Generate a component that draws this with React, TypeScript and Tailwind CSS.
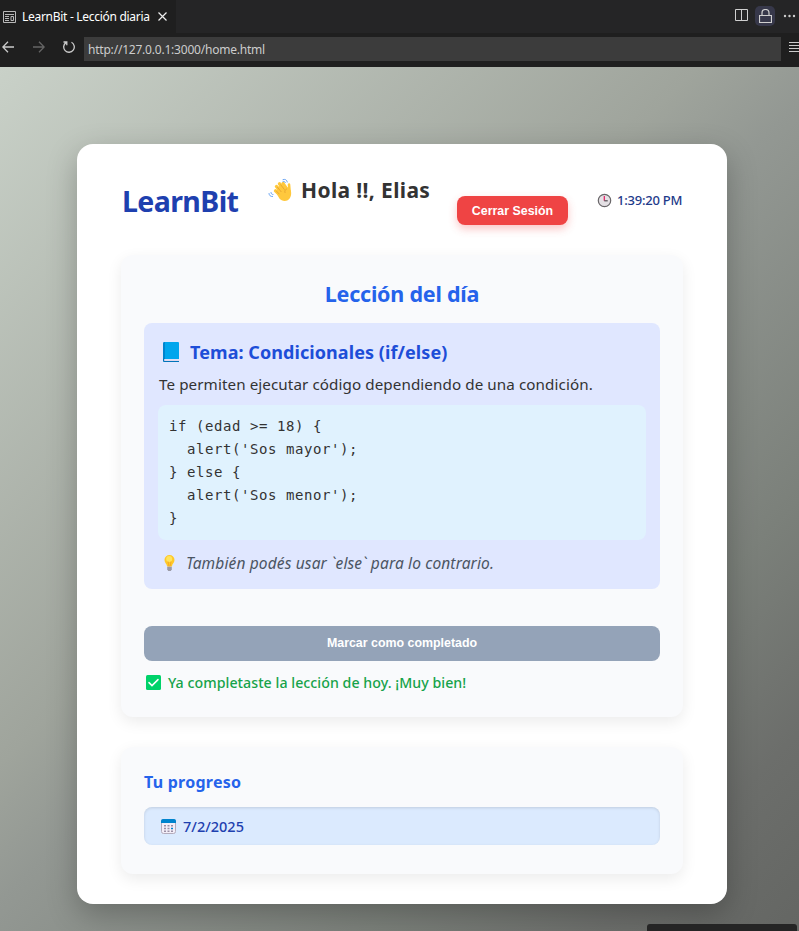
import React from "react";

const sans = "font-['Noto_Sans','Open_Sans',sans-serif]";

function Wave() {
  return (
    <svg className="h-6 w-6 shrink-0" viewBox="0 0 24 24" fill="none">
      <g stroke="#ffc83d" strokeLinecap="round">
        <path d="M8.500 8.500l5.500 6.500" strokeWidth="3.400" />
        <path d="M11.500 5.800l6 7" strokeWidth="3.400" />
        <path d="M15 5.500l4 6" strokeWidth="3.200" />
        <path d="M7.500 12.800l5.500 5.200" strokeWidth="3.400" />
        <path d="M21 6.500l.6 7" strokeWidth="2.600" />
      </g>
      <path d="M8 14.500l3-6.500 8 1 3.800 3.500c1.200 4.500-.6 8.500-3 9.700-3 1.500-6.400.8-8.400-1.700z" fill="#ffc83d" />
      <path d="M9.500 9.300l3.600 4.400M12.700 6.800l3.600 4.600M8.300 13l2.800 2.900M18.500 11c-1.800 1-2 2.300-1.500 3.600" stroke="#e09a2c" strokeWidth=".7" strokeLinecap="round" />
      <path d="M15 1.600c2-.8 4 .2 4.300 2.400M15 3.600c1.200-.3 2 .1 2.400 1M1 15.500c.2 2 1.500 3.200 3.600 3M3 14.500c.1 1.300.8 2 2 2" stroke="#5a9bf0" strokeWidth=".9" strokeLinecap="round" />
    </svg>
  );
}

function Clock() {
  return (
    <svg className="h-[15px] w-[15px] shrink-0" viewBox="0 0 15 15" fill="none">
      <circle cx="7.500" cy="7.500" r="6.200" fill="#e4e0e4" stroke="#686568" strokeWidth="1.200" />
      <path d="M7.300 3v4.700" stroke="#e51b62" strokeWidth="1.200" />
      <path d="M7.300 7.800h3.400" stroke="#504a50" strokeWidth="1.200" />
    </svg>
  );
}

function Book() {
  return (
    <svg className="h-5 w-4 shrink-0" viewBox="0 0 16 20">
      <path d="M0 1.500Q0 0 1.500 0H15q1 0 1 1v16H0z" fill="#00a6ed" />
      <path d="M0 1.500Q0 0 1.500 0H2v17H0z" fill="#0084ce" />
      <path d="M1 17.500h15V19H1z" fill="#e1d8ec" />
      <path d="M0 16.500h1.200V19H16v1H1Q0 20 0 19z" fill="#0074ba" />
    </svg>
  );
}

function Bulb() {
  return (
    <svg className="h-4 w-[11px] shrink-0" viewBox="0 0 11 16">
      <path d="M5.500 0A5 5 0 0 0 .5 5c0 2.800 2.200 3.500 2.600 6.500h4.800C8.300 8.500 10.500 7.800 10.500 5a5 5 0 0 0-5-5z" fill="#ffc928" />
      <circle cx="5.200" cy="4" r="3" fill="#ffe45d" />
      <path d="M4 6.500l1 5M7 6.500l-1 5" stroke="#f59e23" strokeWidth=".8" />
      <path d="M3.200 11.700h4.600v2.500L6.800 16H4.200l-1-1.800z" fill="#9b9aa5" />
    </svg>
  );
}

function Calendar() {
  return (
    <svg className="h-[15px] w-[15px] shrink-0" viewBox="0 0 15 15">
      <rect x=".5" y=".5" width="14" height="14" rx="2" fill="#f3eef8" stroke="#b4acbc" />
      <path d="M0 4V2Q0 0 2 0h11q2 0 2 2v2z" fill="#0084ce" />
      <path d="M3 6h2v1.500H3zm3.500 0h2v1.500h-2zM3 8.800h2v1.500H3zm3.500 0h2v1.500h-2zM3 11.500h2V13H3zm3.500 0h2V13h-2zm3.500 0h2V13h-2zM10 6h2v1.500h-2z" fill="#9b8fa5" />
      <path d="M10 8.800h2v1.500h-2z" fill="#0084ce" />
    </svg>
  );
}

function BrowserBar() {
  return (
    <header className={`h-[67px] bg-[#1f1f1f] text-[#cccccc] ${sans}`}>
      <div className="flex h-[33px] bg-[#252526]">
        <div className="flex w-[176px] items-center bg-[#1f1f1f] pl-[3px]">
          <svg className="h-3 w-[13px]" viewBox="0 0 13 12" fill="none" stroke="#b8b8b8">
            <path d="M.5 .5h12v11H.5zM2 3.500h9M2 5.500h4M2 7.500h4M2 9.500h4M8 5.500h2.500v4H8z" />
          </svg>
          <span className="ml-[6px] w-[127px] whitespace-nowrap text-[12px] tracking-[-0.290px] text-white">LearnBit - Lección diaria</span>
          <svg className="ml-[9px] mb-px h-[9px] w-[9px]" viewBox="0 0 9 9" stroke="#eee" strokeWidth="1.200"><path d="M.5 .5l8 8M8.500 .5l-8 8" /></svg>
        </div>
        <div className="ml-auto flex items-center pr-[3px]">
          <svg className="mb-[3px] h-3 w-[13px]" viewBox="0 0 13 12" fill="none" stroke="#d0d0d0"><path d="M.5 .5h12v11H.5zM6.500 .5v11" /></svg>
          <div className="ml-[7px] mb-px flex h-5 w-5 items-center justify-center rounded-[5px] bg-[#37384a]">
            <svg className="mb-px h-[14px] w-[13px]" viewBox="0 0 13 14" fill="none" stroke="#d0d0d0"><path d="M.5 6.500h12v7H.5zM3 6V4a3.500 3.500 0 0 1 7 0v2" strokeWidth="1.200" /></svg>
          </div>
          <svg className="mb-[2px] ml-2 h-3 w-[13px]" viewBox="0 0 13 12" fill="#ccc"><circle cx="2" cy="6" r="1.200" /><circle cx="6.500" cy="6" r="1.200" /><circle cx="11" cy="6" r="1.200" /></svg>
        </div>
      </div>
      <div className="flex h-[34px] items-start pl-[2px] pt-1">
        <svg className="mt-1 h-3 w-3" viewBox="0 0 12 12" fill="none" stroke="#ccc" strokeWidth="1.300"><path d="M6 .8L.8 6 6 11.200M1 6h11" /></svg>
        <svg className="ml-[19px] mt-1 h-3 w-3" viewBox="0 0 12 12" fill="none" stroke="#666" strokeWidth="1.300"><path d="M6 .8L11.200 6 6 11.200M11 6H0" /></svg>
        <svg className="ml-[18px] mt-1 h-3 w-3" viewBox="0 0 12 12" fill="none" stroke="#ccc" strokeWidth="1.300"><path d="M8.500 1.300A5.300 5.300 0 1 1 3 1.600M.5 1h3.300v3.300" /></svg>
        <div className="ml-[9px] flex h-6 w-[697px] items-center bg-[#3c3c3c] pl-1 pt-0.5 text-[12px] tracking-[-0.210px]">http://127.0.0.1:3000/home.html</div>
        <svg className="ml-2 mt-[5px] h-[11px] w-[10px]" viewBox="0 0 10 11" stroke="#ccc"><path d="M0 .5h10M0 3.500h10M0 6.500h10M0 9.500h10" /></svg>
      </div>
    </header>
  );
}

const code = `if (edad >= 18) {
  alert('Sos mayor');
} else {
  alert('Sos menor');
}`;

export default function App() {
  return (
    <div className="relative h-[931px] w-[799px] overflow-hidden">
      <BrowserBar />
      <main className={`h-[864px] bg-[linear-gradient(135deg,#c9d1c8_0%,#9fa49c_42%,#939893_50%,#7b807a_74%,#6c6e6b_88%,#646663_100%)] pl-[77px] pt-[77px] text-[#333] ${sans}`}>
        <div className="h-[760px] w-[650px] rounded-[16px] bg-white px-[45px] shadow-[0_10px_30px_rgba(0,0,0,0.25)]">
          <div className="flex h-[111px] items-start">
            <h1 className="mt-[37px] w-[116px] shrink-0 whitespace-nowrap text-[28.500px] leading-[40px] font-bold tracking-[-0.600px] text-[#1e40af]">LearnBit</h1>
            <div className="ml-[30px] mt-[31px] flex w-[189px] shrink-0 items-center">
              <Wave />
              <h2 className="ml-[9px] whitespace-nowrap text-[21px] leading-[30px] font-bold tracking-[0.360px]">Hola !!, Elias</h2>
            </div>
            <button className="mt-[52px] h-[29px] w-[111px] shrink-0 rounded-lg bg-[#ef4444] pt-px font-['Liberation_Sans',Arial,sans-serif] text-[12.400px] font-bold text-white shadow-[0_4px_8px_rgba(239,68,68,0.3)]">Cerrar Sesión</button>
            <div className="ml-[29px] mt-[46px] flex items-center whitespace-nowrap text-[13px] leading-[20px] font-medium tracking-[-0.220px] text-[#1e3a8a]">
              <Clock /><span className="ml-[5px]">1:39:20 PM</span>
            </div>
          </div>

          <section className="-mx-px h-[462px] w-[562px] rounded-xl bg-[#f9fafc] px-[23px] shadow-[0_5px_15px_rgba(0,0,0,0.08)]">
            <h2 className="pt-[23px] text-center text-[21.500px] leading-[32px] font-bold tracking-[-0.220px] text-[#2563eb]">Lección del día</h2>
            <div className="mt-[13px] h-[266px] w-[516px] rounded-lg bg-[#e0e7ff] px-[14px]">
              <h3 className="flex items-center pl-[5px] pt-[15px] text-[18px] leading-[28px] font-bold tracking-[0.070px] text-[#1d4ed8]"><Book /><span className="ml-[11px] whitespace-nowrap">Tema: Condicionales (if/else)</span></h3>
              <p className="mt-[6px] whitespace-nowrap pl-px text-[15.200px] leading-6 tracking-[0.090px]">Te permiten ejecutar código dependiendo de una condición.</p>
              <pre className="mt-[9px] h-[135px] rounded-lg bg-[#e0f2fe] px-[11px] pt-[10px] font-['DejaVu_Sans_Mono',monospace] text-[14px] leading-[22.900px] tracking-[0.570px] text-[#333]">{code}</pre>
              <p className="mt-[11px] flex items-center pl-[6px] text-[15.500px] leading-6 tracking-[0.140px] text-[#4b5563]"><Bulb /><em className="ml-[11px] whitespace-nowrap">También podés usar `else` para lo contrario.</em></p>
            </div>
            <button className="mt-[37px] h-[35px] w-[516px] rounded-lg bg-[#94a3b8] font-['Liberation_Sans',Arial,sans-serif] text-[12.400px] font-bold text-white">Marcar como completado</button>
            <p className="mt-[10px] flex items-center pl-[2px] text-[14.200px] leading-6 font-medium tracking-[0.040px] text-[#16a34a]">
              <svg className="mb-[2px] h-[15px] w-[15px]" viewBox="0 0 15 15" fill="none"><rect width="15" height="15" rx="1.500" fill="#00d26a" /><path d="M3 7.600l3 3 6-6" stroke="#fff" strokeWidth="1.500" strokeLinecap="round" /></svg>
              <span className="ml-[7px] whitespace-nowrap">Ya completaste la lección de hoy. ¡Muy bien!</span>
            </p>
          </section>

          <section className="-mx-px mt-[30px] h-[127px] w-[562px] rounded-xl bg-[#f9fafc] px-[23px] shadow-[0_5px_15px_rgba(0,0,0,0.08)]">
            <h3 className="pt-[21px] text-[16px] leading-[28px] font-bold tracking-[0.250px] text-[#2563eb]">Tu progreso</h3>
            <div className="mt-[11px] flex h-[38px] w-[516px] items-center rounded-lg bg-[#dbeafe] pl-[17px] text-[14.500px] font-medium text-[#1e40af] shadow-[inset_0_1px_3px_rgba(0,0,0,0.12)]">
              <Calendar /><span className="ml-[7px] pt-px">7/2/2025</span>
            </div>
          </section>
        </div>
      </main>
      <div className="absolute bottom-0 left-[647px] h-[7px] w-[150px] rounded-t-[3px] bg-[#252525]" />
    </div>
  );
}
